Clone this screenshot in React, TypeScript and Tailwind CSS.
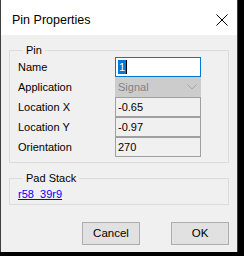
export default function App() {
  const rows = [
    { label: 'Location X', value: '-0.65' },
    { label: 'Location Y', value: '-0.97' },
    { label: 'Orientation', value: '270' },
  ];

  return (
    <div className="w-[244px] h-[256px] bg-black flex items-start" style={{ fontFamily: '"Liberation Sans", Arial, sans-serif' }}>
      <div className="w-[238px] h-[252px] bg-[#f0f0f0] flex flex-col border-l border-r border-[#3f3f3f] text-[11px] text-black">
        {/* title bar */}
        <div className="h-[35px] bg-white flex items-center justify-between pl-[11px] pr-[9px] pt-[5px] shrink-0">
          <span className="text-[12.5px] leading-none">Pin Properties</span>
          <svg width="12" height="12" viewBox="0 0 12 12">
            <path d="M0.5 0.5 L11.5 11.5 M11.5 0.5 L0.5 11.5" stroke="#000" strokeWidth="1" />
          </svg>
        </div>

        <div className="flex flex-col pt-[8px] pl-[8px] pr-[8px]">
          <fieldset className="border border-[#dcdcdc] pl-[8px] pb-[5px]">
            <legend className="ml-[5px] px-[3px] leading-[14px]">Pin</legend>
            <div className="flex items-center h-[20px]">
              <span className="w-[97px]">Name</span>
              <div className="w-[86px] h-[20px] bg-white border border-[#0078d7] flex items-center pl-[2px]">
                <span className="bg-[#0078d7] text-white leading-[14px] px-[1px]">1</span>
                <span className="w-[1px] h-[14px] bg-black" />
              </div>
            </div>
            <div className="flex items-center h-[20px]">
              <span className="w-[97px]">Application</span>
              <div className="w-[86px] h-[20px] bg-[#cccccc] flex items-center justify-between pl-[3px] pr-[4px] text-[#838383]">
                <span>Signal</span>
                <svg width="10" height="6" viewBox="0 0 10 6">
                  <polyline points="0.5,0.5 5,5 9.5,0.5" fill="none" stroke="#a8a8a8" strokeWidth="1" />
                </svg>
              </div>
            </div>
            {rows.map((r) => (
              <div key={r.label} className="flex items-center h-[20px]">
                <span className="w-[97px]">{r.label}</span>
                <div className="w-[86px] h-[20px] bg-[#f0f0f0] border border-[#a0a0a0] flex items-center pl-[2px]">
                  {r.value}
                </div>
              </div>
            ))}
          </fieldset>

          <fieldset className="mt-[8px] border border-[#dcdcdc] pl-[8px] pt-[2px] pb-[3px]">
            <legend className="ml-[5px] px-[3px] leading-[14px]">Pad Stack</legend>
            <a href="#" className="text-[#0000ff] underline leading-[14px] block w-fit">r58_39r9</a>
          </fieldset>

          <div className="flex justify-end gap-[31px] mt-[17px] pr-[0px]">
            <button className="w-[58px] h-[23px] bg-[#e1e1e1] border border-[#adadad] text-[11.5px]">Cancel</button>
            <button className="w-[58px] h-[23px] bg-[#e1e1e1] border border-[#adadad] text-[11.5px]">OK</button>
          </div>
        </div>
      </div>
    </div>
  );
}
